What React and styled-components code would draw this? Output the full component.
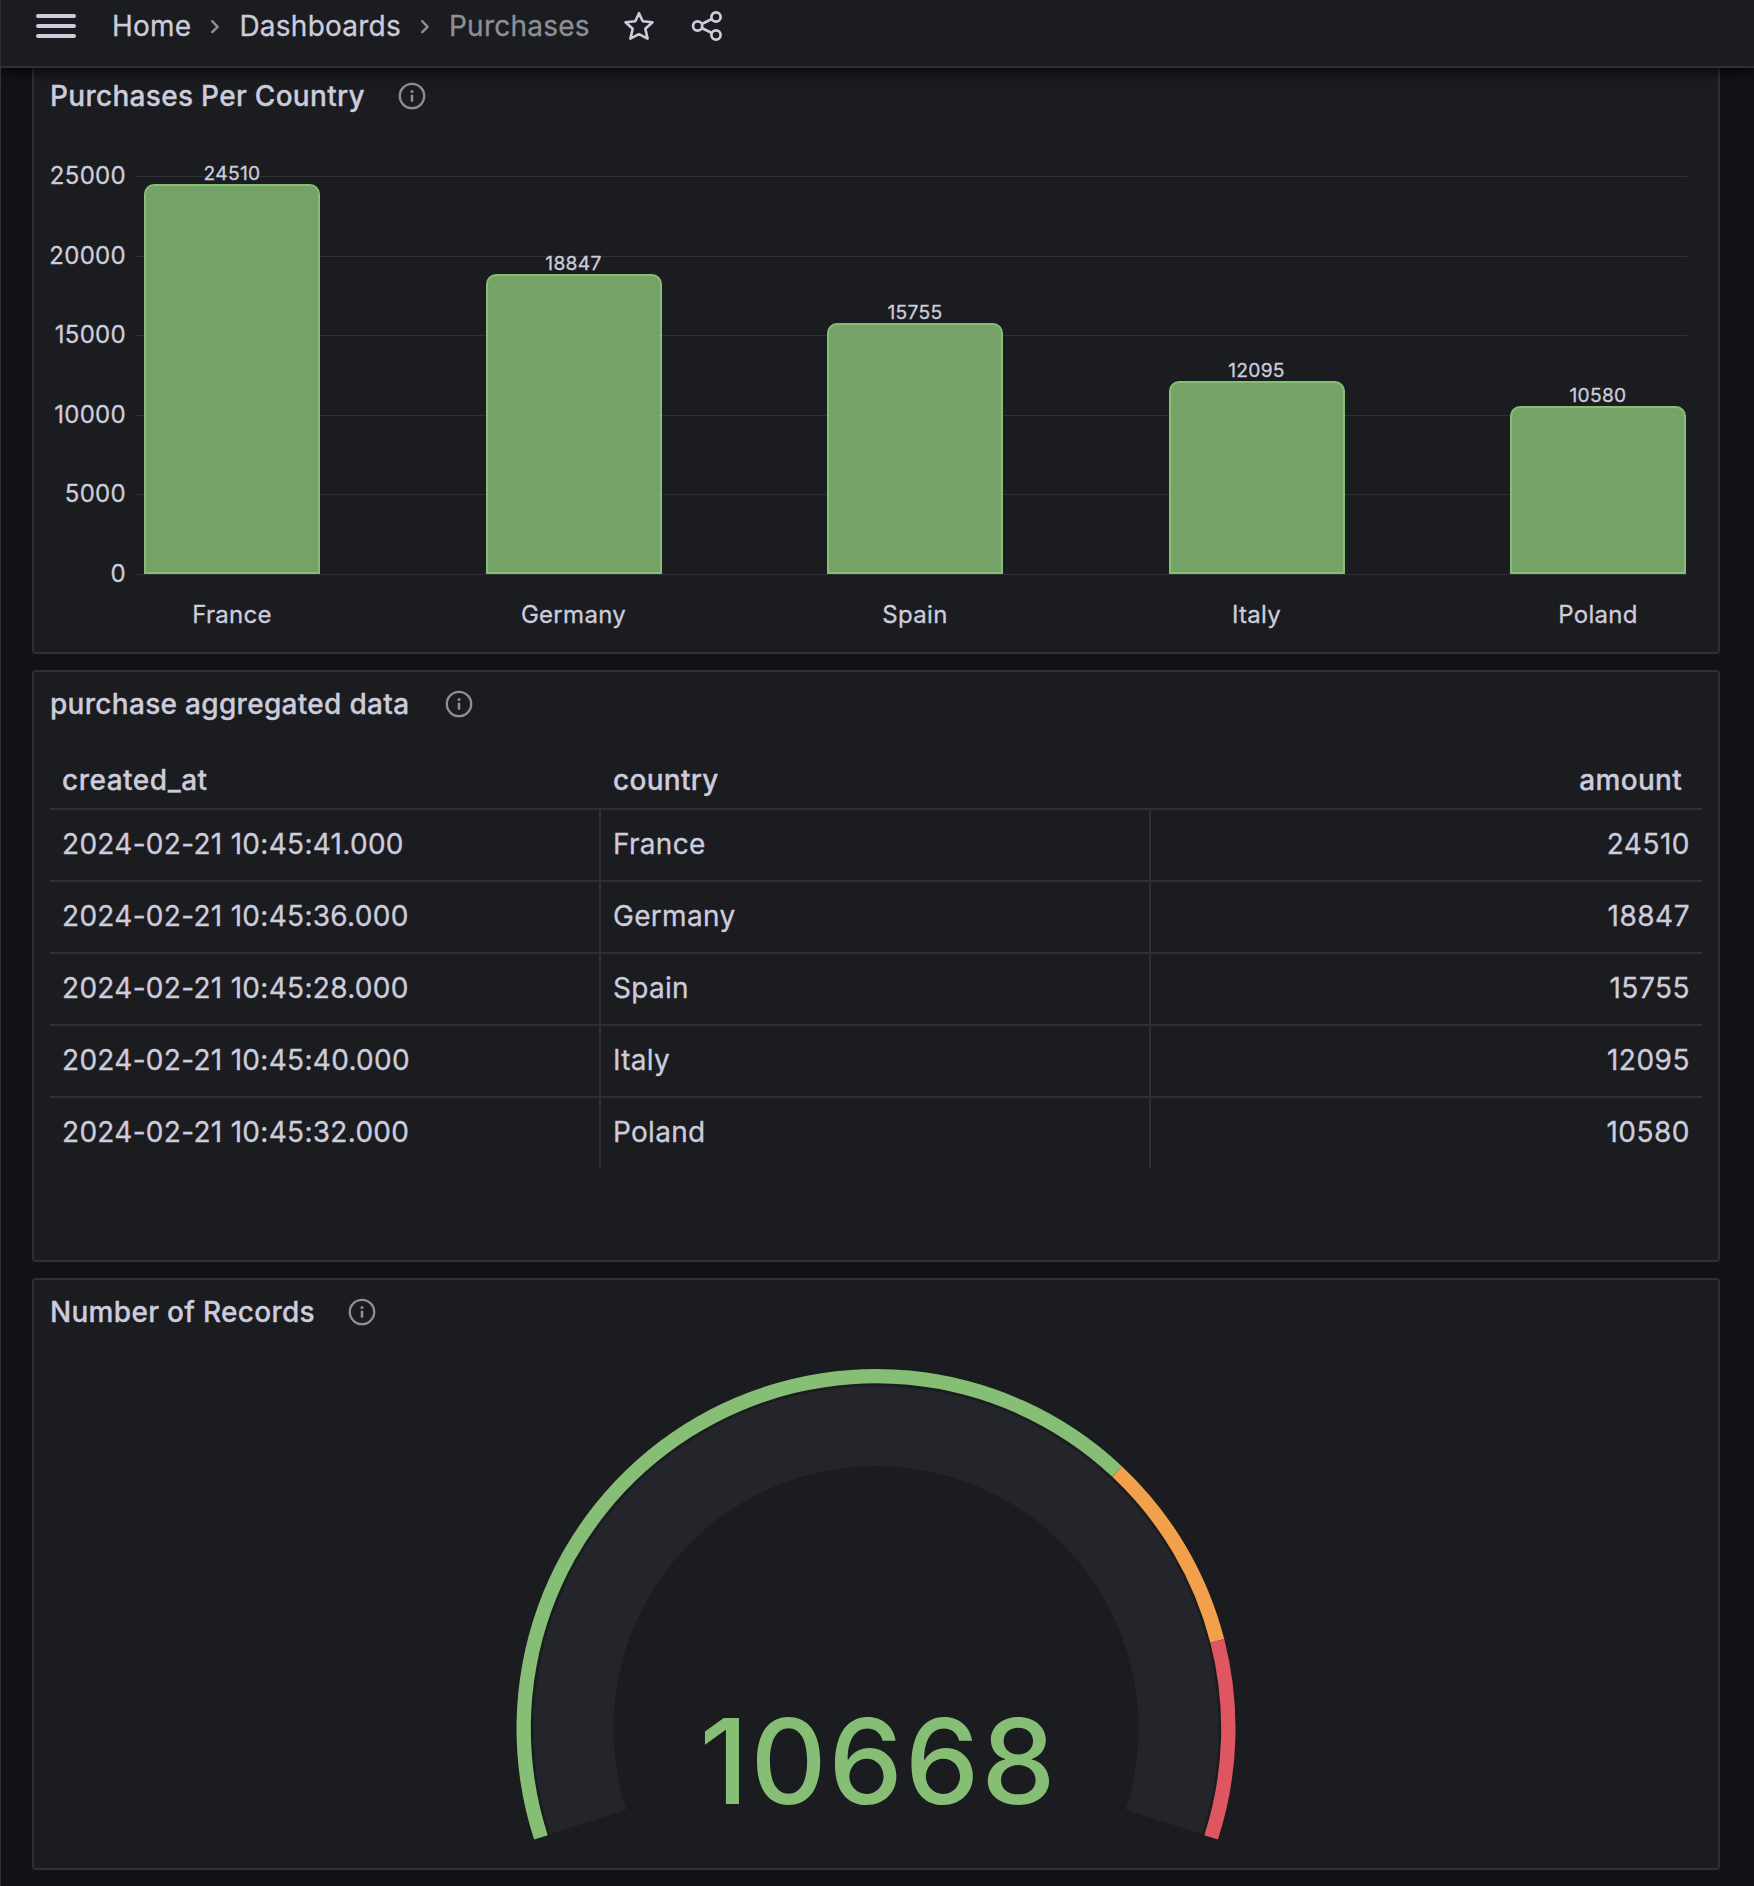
import React from "react";
import styled, { createGlobalStyle } from "styled-components";

const c = {
  canvas: "#111217",
  panel: "#1b1c20",
  line: "#2f3035",
  text: "#ccccdc",
  dim: "#8e8e99",
  green: "#87be75",
  orange: "#f2a04b",
  red: "#e05660",
};

const Global = createGlobalStyle`
  * { box-sizing: border-box; }
  body {
    margin: 0;
    background: ${c.canvas};
    color: ${c.text};
    font-family: Inter, "Liberation Sans", sans-serif;
    font-size: 28px;
    letter-spacing: 0.3px;
    -webkit-text-stroke: 0.3px currentColor;
  }
`;

const Page = styled.div`
  height: 1886px;
  overflow: hidden;
  border-left: 1px solid ${c.line};
  display: flex;
  flex-direction: column;
`;

const TopBar = styled.header`
  position: relative;
  z-index: 1;
  flex: none;
  height: 68px;
  padding: 0 0 14px 35px;
  display: flex;
  align-items: center;
  background: ${c.panel};
  border-bottom: 2px solid ${c.line};
  box-shadow: 0 1px 14px #000;
`;

const Burger = styled.div`
  width: 40px;
  display: grid;
  gap: 6px;
  margin-right: 36px;
  span {
    height: 4px;
    border-radius: 2px;
    background: ${c.text};
  }
`;

const Crumb = styled.span`
  letter-spacing: 0.24px;
  color: ${(p) => (p.$current ? c.dim : c.text)};
`;

const Svg = styled.svg`
  display: block;
  flex: none;
  margin-left: ${(p) => p.$left || 0}px;
  margin-right: ${(p) => p.$right || 0}px;
`;

const Panels = styled.main`
  display: grid;
  grid-auto-rows: 592px;
  gap: 16px;
  margin: -6px 34px 0 31px;
`;

const Panel = styled.section`
  display: flex;
  flex-direction: column;
  background: ${c.panel};
  border: 2px solid ${c.line};
  border-radius: 4px;
`;

const PanelHeader = styled.div`
  height: 64px;
  padding-left: 16px;
  display: flex;
  align-items: center;
  flex: none;
`;

const PanelTitle = styled.h2`
  margin: 0 ${(p) => p.$gap}px 0 0;
  font-size: 28px;
  font-weight: 500;
  white-space: nowrap;
`;

const Chart = styled.div`
  display: grid;
  grid-template-columns: 92px 1551px;
  grid-template-rows: 399px 80px;
  column-gap: 10px;
  margin-top: 48px;
  font-size: 24px;
`;

const YAxis = styled.div`
  display: flex;
  flex-direction: column;
  justify-content: space-between;
  align-items: flex-end;
  margin: -16px 0 -15px;
  line-height: 32px;
`;

const Plot = styled.div`
  display: grid;
  grid-template-rows: 399px;
`;

const Grid = styled.div`
  grid-area: 1 / 1;
  display: flex;
  flex-direction: column;
  justify-content: space-between;
  span {
    height: 1px;
    background: ${c.line};
  }
`;

const Bars = styled.div`
  grid-area: 1 / 1;
  display: flex;
  justify-content: space-between;
  align-items: flex-end;
  padding: 0 1px 1px 8px;
`;

const Column = styled.div`
  width: 176px;
  text-align: center;
`;

const BarValue = styled.div`
  margin-bottom: -1px;
  font-size: 19.2px;
  line-height: 24px;
`;

const Bar = styled.div`
  background: rgba(135, 190, 117, 0.84);
  border: 2px solid ${c.green};
  border-radius: 10px 10px 0 0;
`;

const XAxis = styled.div`
  grid-column: 2;
  display: flex;
  justify-content: space-between;
  padding: 24px 1px 0 8px;
  line-height: 32px;
  span {
    width: 176px;
    text-align: center;
  }
`;

const Table = styled.div`
  margin: 2px 16px 0;
`;

const Row = styled.div`
  display: grid;
  grid-template-columns: 551px 550px 1fr;
  height: ${(p) => (p.$last ? 70 : 72)}px;
  border-bottom: ${(p) => (p.$last ? "0" : `2px solid ${c.line}`)};
`;

const HeadRow = styled(Row)`
  font-weight: 500;
  padding-top: 14px;
`;

const Cell = styled.div`
  display: flex;
  align-items: center;
  justify-content: ${(p) => (p.$end ? "flex-end" : "flex-start")};
  padding: 0 ${(p) => (p.$head ? 20 : 12)}px ${(p) => (p.$body ? 2 : 0)}px 12px;
  border-right: ${(p) => (p.$rule ? `2px solid ${c.line}` : "0")};
  letter-spacing: ${(p) => (p.$wide ? 0.5 : 0.3)}px;
`;

const GaugeBox = styled.div`
  display: grid;
  justify-items: center;
`;

const GaugeSvg = styled.svg`
  grid-area: 1 / 1;
`;

const GaugeValue = styled.div`
  grid-area: 1 / 1;
  margin: 346px 0 0 5px;
  font-size: 118px;
  line-height: 142px;
  font-weight: 500;
  letter-spacing: 2px;
  -webkit-text-stroke: 0;
  color: ${c.green};
`;

const data = [
  ["2024-02-21 10:45:41.000", "France", 24510],
  ["2024-02-21 10:45:36.000", "Germany", 18847],
  ["2024-02-21 10:45:28.000", "Spain", 15755],
  ["2024-02-21 10:45:40.000", "Italy", 12095],
  ["2024-02-21 10:45:32.000", "Poland", 10580],
];

const ticks = [25000, 20000, 15000, 10000, 5000, 0];

const CX = 400;
const CY = 384.5;
const point = (r, f) => {
  const a = ((198 - 216 * f) * Math.PI) / 180;
  return `${(CX + r * Math.cos(a)).toFixed(2)} ${(CY - r * Math.sin(a)).toFixed(2)}`;
};
const ring = (outer, inner, from, to) => {
  const big = (to - from) * 216 > 180 ? 1 : 0;
  return `M${point(outer, from)} A${outer} ${outer} 0 ${big} 1 ${point(outer, to)} L${point(inner, to)} A${inner} ${inner} 0 ${big} 0 ${point(inner, from)} Z`;
};

const Chevron = () => (
  <Svg width="10" height="16" viewBox="0 0 10 16" fill="none" stroke={c.dim} strokeWidth="2.4" strokeLinecap="round" strokeLinejoin="round" $left={18.8} $right={19.2}>
    <path d="M2.2 3.2 L7.6 8.8 L2.2 14.2" />
  </Svg>
);

const Info = () => (
  <Svg width="28" height="28" viewBox="0 0 28 28" fill="none" stroke={c.dim} strokeWidth="2.3">
    <circle cx="14" cy="14" r="12.2" />
    <path d="M14 13.8 V18.6" strokeWidth="2.6" strokeLinecap="round" />
    <circle cx="14" cy="9.5" r="1.5" fill={c.dim} stroke="none" />
  </Svg>
);

const Title = ({ children, gap = 33 }) => (
  <PanelHeader>
    <PanelTitle $gap={gap}>{children}</PanelTitle>
    <Info />
  </PanelHeader>
);

export default function App() {
  return (
    <Page>
      <Global />
      <TopBar>
        <Burger><span /><span /><span /></Burger>
        <Crumb>Home</Crumb>
        <Chevron />
        <Crumb>Dashboards</Crumb>
        <Chevron />
        <Crumb $current>Purchases</Crumb>
        <Svg width="32" height="32" viewBox="0 0 32 32" fill="none" stroke={c.text} strokeWidth="2.6" strokeLinejoin="round" $left={33}>
          <path d="M16 3.2 L19.7 11.3 L29.5 12.3 L22.3 18.8 L24.6 28.6 L16 24.2 L7.4 28.6 L9.7 18.8 L2.5 12.3 L12.3 11.3 Z" />
        </Svg>
        <Svg width="32" height="32" viewBox="0 0 32 32" fill="none" stroke={c.text} strokeWidth="2.7" $left={36}>
          <circle cx="6.6" cy="16" r="4.6" />
          <circle cx="25" cy="7" r="4.6" />
          <circle cx="25" cy="25" r="4.6" />
          <path d="M10.7 14 L20.9 9 M10.7 18 L20.9 23" />
        </Svg>
      </TopBar>
      <Panels>
        <Panel>
          <Title>Purchases Per Country</Title>
          <Chart>
            <YAxis>{ticks.map((t) => <span key={t}>{t}</span>)}</YAxis>
            <Plot>
              <Grid>{ticks.map((t) => <span key={t} />)}</Grid>
              <Bars>
                {data.map(([, name, n]) => (
                  <Column key={name}>
                    <BarValue>{n}</BarValue>
                    <Bar style={{ height: Math.round((n / 25000) * 398) }} />
                  </Column>
                ))}
              </Bars>
            </Plot>
            <XAxis>{data.map(([, name]) => <span key={name}>{name}</span>)}</XAxis>
          </Chart>
        </Panel>
        <Panel>
          <Title gap={36}>purchase aggregated data</Title>
          <Table>
            <HeadRow>
              <Cell $wide>created_at</Cell>
              <Cell>country</Cell>
              <Cell $end $head>amount</Cell>
            </HeadRow>
            {data.map(([at, name, n], i) => (
              <Row key={name} $last={i === data.length - 1}>
                <Cell $body $rule>{at}</Cell>
                <Cell $body $rule>{name}</Cell>
                <Cell $body $wide $end>{n}</Cell>
              </Row>
            ))}
          </Table>
        </Panel>
        <Panel>
          <Title>Number of Records</Title>
          <GaugeBox>
            <GaugeSvg width="800" height="510" viewBox="0 0 800 510">
              <path d={ring(342.5, 262.5, 0, 1)} fill="#24252a" />
              <path d={ring(359.5, 345.2, 0, 0.7)} fill={c.green} />
              <path d={ring(359.5, 345.2, 0.7, 0.85)} fill={c.orange} />
              <path d={ring(359.5, 345.2, 0.85, 1)} fill={c.red} />
            </GaugeSvg>
            <GaugeValue>10668</GaugeValue>
          </GaugeBox>
        </Panel>
      </Panels>
    </Page>
  );
}
